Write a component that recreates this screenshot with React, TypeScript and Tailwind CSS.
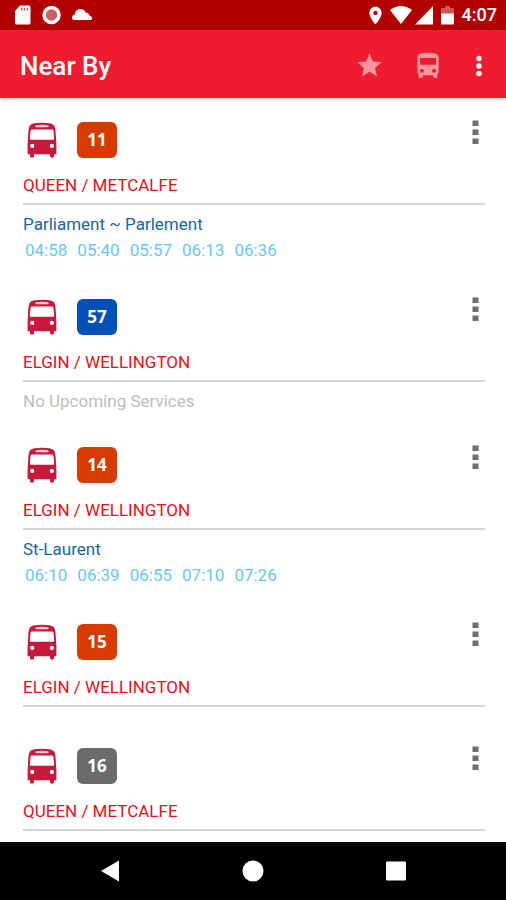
import type { ReactNode } from 'react';
import { MdDirectionsBus, MdLocationOn, MdStar } from 'react-icons/md';
import { clsx } from 'clsx';

type RouteColor = 'orange' | 'blue' | 'gray';

interface Stop {
  route: string;
  color: RouteColor;
  name: string;
  destination?: string;
  times?: string[];
  message?: string;
}

const stops: Stop[] = [
  {
    route: '11',
    color: 'orange',
    name: 'QUEEN / METCALFE',
    destination: 'Parliament ~ Parlement',
    times: ['04:58', '05:40', '05:57', '06:13', '06:36'],
  },
  { route: '57', color: 'blue', name: 'ELGIN / WELLINGTON', message: 'No Upcoming Services' },
  {
    route: '14',
    color: 'orange',
    name: 'ELGIN / WELLINGTON',
    destination: 'St-Laurent',
    times: ['06:10', '06:39', '06:55', '07:10', '07:26'],
  },
  { route: '15', color: 'orange', name: 'ELGIN / WELLINGTON' },
  { route: '16', color: 'gray', name: 'QUEEN / METCALFE' },
];

const badgeColors: Record<RouteColor, string> = {
  orange: 'bg-[#d83b01]',
  blue: 'bg-[#0050b8]',
  gray: 'bg-[#6b6b6b]',
};

function BusIcon() {
  return (
    <svg width="30" height="36" viewBox="0 0 30 36" aria-hidden="true">
      <path
        fill="#c8193c"
        fillRule="evenodd"
        d="M15 .8C9 .8 5 1.600 3.300 3.100C2 4.300 1.600 7 1.300 11L.6 22V32.300H3V34C3 36.200 7 36.200 7 34V32.300H23V34C23 36.200 27 36.200 27 34V32.300H29.400V22L28.700 11C28.400 7 28 4.300 26.700 3.100C25 1.600 21 .8 15 .8ZM5 7.500H25Q26.300 7.500 26.400 8.800L27.200 16.500Q27.300 17.800 26 17.800H4Q2.700 17.800 2.800 16.500L3.600 8.800Q3.700 7.500 5 7.500ZM5.200 21.800A2.100 2.100 0 1 0 5.200 26A2.100 2.100 0 1 0 5.200 21.800ZM24.800 21.800A2.100 2.100 0 1 0 24.800 26A2.100 2.100 0 1 0 24.800 21.800Z"
      />
      <path fill="#f6cdd3" d="M9 3.200Q15 2.300 21 3.200L21.800 4.200Q21.500 5.300 20.500 5.300H9.500Q8.500 5.300 8.200 4.200Z" />
    </svg>
  );
}

function StatusBar() {
  return (
    <div className="flex h-[30px] shrink-0 items-center justify-between bg-[#b20000] pr-[9px] pl-[14px] text-white">
      <div className="flex items-center gap-[11px]">
        <svg width="17" height="20" viewBox="0 0 17 20" aria-hidden="true">
          <path fill="#fff" d="M6 .5H15Q16.500 .5 16.500 2V18Q16.500 19.500 15 19.500H2.500Q1 19.500 1 18V6Z" />
          <path fill="#c96060" d="M7 3H8.500V5.500H7ZM9.800 3H11.300V5.500H9.800ZM12.600 3H14.100V5.500H12.600Z" />
        </svg>
        <svg width="19" height="20" viewBox="0 0 19 20" aria-hidden="true">
          <circle cx="9.500" cy="10" r="7.500" fill="#cf5f68" stroke="#fff" strokeWidth="3.500" />
        </svg>
        <svg width="20" height="20" viewBox="0 0 20 20" aria-hidden="true">
          <path
            fill="#fff"
            d="M3 15C1 15 0 14.200 0 12.800C0 11 1.200 9.900 3 9.600C3 6.300 5 4 8.200 4C11 4 13 5.400 13.600 7.600C15.500 7.600 17 8.800 17.400 10.500C19 10.800 20 12 20 13.400C20 14.500 19.400 15 18.300 15Z"
          />
        </svg>
      </div>
      <div className="flex items-center">
        <MdLocationOn size={21} />
        <svg width="22" height="20" viewBox="0 0 22 20" className="ml-1" aria-hidden="true">
          <path fill="#fff" d="M0 5Q11 -3 22 5L11 19Z" />
        </svg>
        <svg width="18" height="20" viewBox="0 0 18 20" className="ml-[3px]" aria-hidden="true">
          <path fill="#fff" d="M18 1V19.500H0Z" />
        </svg>
        <svg width="13" height="20" viewBox="0 0 13 20" className="ml-2" aria-hidden="true">
          <path fill="#d05555" d="M4 1H9V3H12Q13 3 13 4V9H0V4Q0 3 1 3H4Z" />
          <path fill="#fff" d="M0 8.500H13V18.500Q13 19.500 12 19.500H1Q0 19.500 0 18.500Z" />
        </svg>
        <span className="ml-2 text-[18px] leading-5 font-medium">4:07</span>
      </div>
    </div>
  );
}

function AppBar() {
  return (
    <header className="z-10 flex h-[68px] shrink-0 items-center bg-[#ee1c2e] pt-[3px] pr-3 pl-5 shadow-[0_1px_3px_rgba(0,0,0,0.3)]">
      <h1 className="flex-1 text-[26px] leading-8 font-medium text-white">Near By</h1>
      <div className="flex items-center">
        <button type="button" aria-label="Favourites" className="mr-7 text-[#f8959d]">
          <MdStar size={29} />
        </button>
        <button type="button" aria-label="Nearby buses" className="mr-5 text-[#f8959d]">
          <MdDirectionsBus size={32} />
        </button>
        <button type="button" aria-label="More options" className="flex w-[30px] justify-center">
          <svg width="6" height="22" viewBox="0 0 6 22" fill="#fff" aria-hidden="true">
            <circle cx="3" cy="3.500" r="2.700" />
            <circle cx="3" cy="11" r="2.700" />
            <circle cx="3" cy="18.500" r="2.700" />
          </svg>
        </button>
      </div>
    </header>
  );
}

function StopItem({ stop }: { stop: Stop }) {
  return (
    <li className="pr-[21px] pb-[10px] pl-[23px] text-[17px] leading-6">
      <div className="flex items-start pt-6">
        <span className="ml-1">
          <BusIcon />
        </span>
        <span
          className={clsx(
            "ml-5 flex h-9 w-10 items-center justify-center rounded-md font-['Open_Sans',sans-serif] text-[17px] font-bold text-white",
            badgeColors[stop.color]
          )}
        >
          {stop.route}
        </span>
        <button
          type="button"
          aria-label={`Options for route ${stop.route}`}
          className="-mt-[3px] mr-[6px] ml-auto"
        >
          <svg width="7" height="26" viewBox="0 0 7 26" fill="#707070" aria-hidden="true">
            <path d="M.5 1.500H6.500V7H.5ZM.5 10.500H6.500V16H.5ZM.5 19.500H6.500V25H.5Z" />
          </svg>
        </button>
      </div>
      <h2 className="mt-[15px] border-b-2 border-[#d6d6d6] pb-[6px] text-[#e31220]">{stop.name}</h2>
      <div className="pt-[7px]">
        {stop.destination && <p className="text-[#1c659c]">{stop.destination}</p>}
        {stop.times && (
          <ul className="flex gap-[10px] pl-[2px] leading-[29px] text-[#6cc5f8]">
            {stop.times.map((time) => (
              <li key={time}>{time}</li>
            ))}
          </ul>
        )}
        {stop.message && <p className="text-[#bdbdbd]">{stop.message}</p>}
      </div>
    </li>
  );
}

function NavButton({ label, children }: { label: string; children: ReactNode }) {
  return (
    <button type="button" aria-label={label} className="flex h-full items-center justify-center">
      <svg width="22" height="22" viewBox="0 0 22 22" fill="#fff" aria-hidden="true">
        {children}
      </svg>
    </button>
  );
}

export default function App() {
  return (
    <div className="flex h-screen flex-col bg-white font-[Roboto,sans-serif]">
      <StatusBar />
      <AppBar />
      <main className="min-h-0 flex-1 overflow-y-auto [scrollbar-width:none]">
        <ul>
          {stops.map((stop) => (
            <StopItem key={stop.route} stop={stop} />
          ))}
        </ul>
      </main>
      <nav className="grid h-[58px] shrink-0 grid-cols-3 bg-black px-[39px]" aria-label="System">
        <NavButton label="Back">
          <path d="M2 11L20 0.500V21.500Z" />
        </NavButton>
        <NavButton label="Home">
          <circle cx="11" cy="11" r="10.500" />
        </NavButton>
        <NavButton label="Recent apps">
          <rect x="1" y="1.500" width="20" height="19" rx="1" />
        </NavButton>
      </nav>
    </div>
  );
}
